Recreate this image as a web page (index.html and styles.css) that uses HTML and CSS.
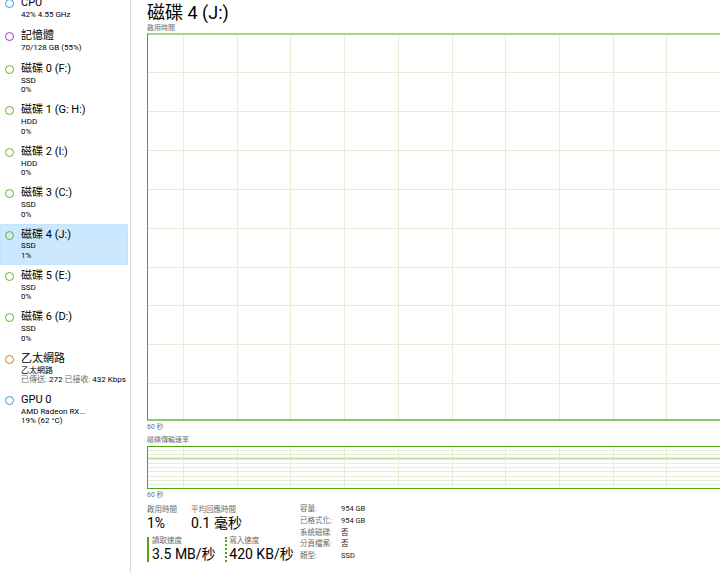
FILE: index.html
```html
<!DOCTYPE html>
<html lang="zh-Hant">
<head>
    <meta charset="UTF-8">
    <meta name="viewport" content="width=device-width, initial-scale=1.0">
    <title>工作管理員 - 效能</title>
    <link rel="stylesheet" href="styles.css">
</head>
<body>
    <div class="sidebar">
        <div class="list">
            <div class="item short">
                <span class="dot cpu"></span>
                <div class="info">
                    <div class="name">CPU</div>
                    <div class="sub">42% 4.55 GHz</div>
                </div>
            </div>
            <div class="item short">
                <span class="dot mem"></span>
                <div class="info">
                    <div class="name">記憶體</div>
                    <div class="sub">70/128 GB (55%)</div>
                </div>
            </div>
            <div class="item">
                <span class="dot disk"></span>
                <div class="info">
                    <div class="name">磁碟 0 (F:)</div>
                    <div class="sub">SSD</div>
                    <div class="sub">0%</div>
                </div>
            </div>
            <div class="item">
                <span class="dot disk"></span>
                <div class="info">
                    <div class="name">磁碟 1 (G: H:)</div>
                    <div class="sub">HDD</div>
                    <div class="sub">0%</div>
                </div>
            </div>
            <div class="item">
                <span class="dot disk"></span>
                <div class="info">
                    <div class="name">磁碟 2 (I:)</div>
                    <div class="sub">HDD</div>
                    <div class="sub">0%</div>
                </div>
            </div>
            <div class="item">
                <span class="dot disk"></span>
                <div class="info">
                    <div class="name">磁碟 3 (C:)</div>
                    <div class="sub">SSD</div>
                    <div class="sub">0%</div>
                </div>
            </div>
            <div class="item selected">
                <span class="dot disk"></span>
                <div class="info">
                    <div class="name">磁碟 4 (J:)</div>
                    <div class="sub">SSD</div>
                    <div class="sub">1%</div>
                </div>
            </div>
            <div class="item">
                <span class="dot disk"></span>
                <div class="info">
                    <div class="name">磁碟 5 (E:)</div>
                    <div class="sub">SSD</div>
                    <div class="sub">0%</div>
                </div>
            </div>
            <div class="item">
                <span class="dot disk"></span>
                <div class="info">
                    <div class="name">磁碟 6 (D:)</div>
                    <div class="sub">SSD</div>
                    <div class="sub">0%</div>
                </div>
            </div>
            <div class="item">
                <span class="dot net"></span>
                <div class="info">
                    <div class="name">乙太網路</div>
                    <div class="sub">乙太網路</div>
                    <div class="sub"><span class="muted">已傳送:</span> 272 <span class="muted">已接收:</span> 432 Kbps</div>
                </div>
            </div>
            <div class="item">
                <span class="dot gpu"></span>
                <div class="info">
                    <div class="name">GPU 0</div>
                    <div class="sub">AMD Radeon RX...</div>
                    <div class="sub">19% (62 °C)</div>
                </div>
            </div>
        </div>
    </div>

    <div class="main">
        <h1 class="title">磁碟 4 (J:)</h1>

        <div class="chart-label">啟用時間</div>
        <div class="chart big">
            <svg class="grid" xmlns="http://www.w3.org/2000/svg">
                <g stroke="#e2f0d7" stroke-width="1" shape-rendering="crispEdges">
                    <line x1="35.5" y1="0" x2="35.5" y2="400"/>
                    <line x1="89.5" y1="0" x2="89.5" y2="400"/>
                    <line x1="142.5" y1="0" x2="142.5" y2="400"/>
                    <line x1="196.5" y1="0" x2="196.5" y2="400"/>
                    <line x1="250.5" y1="0" x2="250.5" y2="400"/>
                    <line x1="304.5" y1="0" x2="304.5" y2="400"/>
                    <line x1="357.5" y1="0" x2="357.5" y2="400"/>
                    <line x1="411.5" y1="0" x2="411.5" y2="400"/>
                    <line x1="465.5" y1="0" x2="465.5" y2="400"/>
                    <line x1="518.5" y1="0" x2="518.5" y2="400"/>
                    <line x1="572.5" y1="0" x2="572.5" y2="400"/>
                    <line x1="0" y1="37.5" x2="700" y2="37.5"/>
                    <line x1="0" y1="76.5" x2="700" y2="76.5"/>
                    <line x1="0" y1="115.5" x2="700" y2="115.5"/>
                    <line x1="0" y1="154.5" x2="700" y2="154.5"/>
                    <line x1="0" y1="193.5" x2="700" y2="193.5"/>
                    <line x1="0" y1="232.5" x2="700" y2="232.5"/>
                    <line x1="0" y1="270.5" x2="700" y2="270.5"/>
                    <line x1="0" y1="309.5" x2="700" y2="309.5"/>
                    <line x1="0" y1="348.5" x2="700" y2="348.5"/>
                </g>
            </svg>
        </div>
        <div class="chart-label tight">60 秒</div>

        <div class="chart-label">磁碟傳輸速率</div>
        <div class="chart small">
            <svg class="grid" xmlns="http://www.w3.org/2000/svg">
                <g stroke="#e2f0d7" stroke-width="1" shape-rendering="crispEdges">
                    <line x1="35.5" y1="0" x2="35.5" y2="60"/>
                    <line x1="89.5" y1="0" x2="89.5" y2="60"/>
                    <line x1="142.5" y1="0" x2="142.5" y2="60"/>
                    <line x1="196.5" y1="0" x2="196.5" y2="60"/>
                    <line x1="250.5" y1="0" x2="250.5" y2="60"/>
                    <line x1="304.5" y1="0" x2="304.5" y2="60"/>
                    <line x1="357.5" y1="0" x2="357.5" y2="60"/>
                    <line x1="411.5" y1="0" x2="411.5" y2="60"/>
                    <line x1="465.5" y1="0" x2="465.5" y2="60"/>
                    <line x1="518.5" y1="0" x2="518.5" y2="60"/>
                    <line x1="572.5" y1="0" x2="572.5" y2="60"/>
                    <line x1="0" y1="3.5" x2="700" y2="3.5"/>
                    <line x1="0" y1="7.5" x2="700" y2="7.5"/>
                    <line x1="0" y1="16.5" x2="700" y2="16.5"/>
                    <line x1="0" y1="20.5" x2="700" y2="20.5"/>
                    <line x1="0" y1="24.5" x2="700" y2="24.5"/>
                    <line x1="0" y1="29.5" x2="700" y2="29.5"/>
                    <line x1="0" y1="33.5" x2="700" y2="33.5"/>
                    <line x1="0" y1="37.5" x2="700" y2="37.5"/>
                </g>
                <line x1="0" y1="11.5" x2="700" y2="11.5" stroke="#bde2a6" stroke-width="2"/>
            </svg>
        </div>
        <div class="chart-label tight">60 秒</div>

        <div class="stats">
            <div class="stats-left">
                <div class="stat-row">
                    <div class="stat w-active">
                        <div class="stat-label">啟用時間</div>
                        <div class="stat-value">1%</div>
                    </div>
                    <div class="stat">
                        <div class="stat-label">平均回應時間</div>
                        <div class="stat-value">0.1 毫秒</div>
                    </div>
                </div>
                <div class="stat-row second">
                    <div class="stat read w-read">
                        <div class="stat-label">讀取速度</div>
                        <div class="stat-value">3.5 MB/秒</div>
                    </div>
                    <div class="stat write">
                        <div class="stat-label">寫入速度</div>
                        <div class="stat-value">420 KB/秒</div>
                    </div>
                </div>
            </div>
            <div class="props">
                <div class="prop"><span class="prop-key">容量:</span><span class="prop-val">954 GB</span></div>
                <div class="prop"><span class="prop-key">已格式化:</span><span class="prop-val">954 GB</span></div>
                <div class="prop"><span class="prop-key">系統磁碟:</span><span class="prop-val">否</span></div>
                <div class="prop"><span class="prop-key">分頁檔案:</span><span class="prop-val">否</span></div>
                <div class="prop"><span class="prop-key">類型:</span><span class="prop-val">SSD</span></div>
            </div>
        </div>
    </div>
</body>
</html>
```

FILE: styles.css
```css
body {
    margin: 0;
    height: 100vh;
    overflow: hidden;
    display: flex;
    background: #fff;
    color: #000;
    font-family: Roboto, "Noto Sans CJK TC", sans-serif;
}

/* left list */
.sidebar {
    width: 130px;
    flex-shrink: 0;
    border-right: 1px solid #dadada;
    overflow: hidden;
}
.list {
    margin-top: -7.4px;
}
.item {
    display: flex;
    align-items: flex-start;
    width: 128px;
    padding: 4.55px 0 4.95px;
    box-sizing: border-box;
}
.item.short {
    padding-bottom: 5.55px;
}
.item.short + .item.short {
    padding-bottom: 6.35px;
}
.item.selected {
    background: #cce8ff;
    box-shadow: inset 0 0 0 1px #c4e3fd;
}
.dot {
    width: 9px;
    height: 9px;
    margin: 2px 7px 0 5px;
    border: 1.3px solid;
    border-radius: 50%;
    box-sizing: border-box;
    flex-shrink: 0;
}
.dot.cpu, .dot.gpu { border-color: #3c97d3; }
.dot.mem { border-color: #9a3cc3; }
.dot.disk { border-color: #62b133; }
.dot.net { border-color: #c27a3c; }
.name {
    font-size: 11px;
    line-height: 12.9px;
    white-space: nowrap;
}
.sub {
    font-size: 8px;
    line-height: 9.5px;
    color: #000;
    white-space: nowrap;
}
.muted {
    color: #6a6a6a;
}

/* right pane */
.main {
    flex: 1;
    min-width: 0;
    overflow: hidden;
    padding: 2.8px 0 0 16px;
}
.title {
    margin: 0;
    font-size: 18px;
    line-height: 19px;
    font-weight: normal;
}
.chart-label {
    margin-top: 2.5px;
    font-size: 7px;
    line-height: 9px;
    color: #6e6e6e;
    white-space: nowrap;
}
.chart-label.tight {
    margin-top: 2.3px;
}
.chart {
    width: 620px;
    box-sizing: border-box;
}
.chart.big {
    height: 388px;
    margin-top: -0.3px;
    border-left: 1px solid #4da60c;
    border-top: 2px solid #a6d487;
    border-bottom: 2px solid #8fc86b;
}
.chart.small {
    height: 43px;
    margin-top: 0.7px;
    border: 1px solid #4da60c;
    border-right: none;
}
.chart-label.tight + .chart-label {
    margin-top: 3.7px;
}
.chart.small + .chart-label.tight {
    margin-top: 2.8px;
}
.grid {
    display: block;
    width: 100%;
    height: 100%;
}

/* bottom numbers */
.stats {
    display: flex;
    margin-top: 2.7px;
}
.stats-left {
    width: 153px;
    padding-top: 3px;
}
.stat-row {
    display: flex;
}
.stat-row.second {
    margin-top: 5.5px;
}
.w-active {
    width: 44px;
}
.w-read {
    width: 78px;
}
.stat {
    box-sizing: border-box;
}
.stat.read {
    border-left: 2px solid #4da60c;
    padding-left: 3px;
}
.stat.write {
    border-left: 2px dotted #4da60c;
    padding-left: 2.3px;
}
.stat-label {
    font-size: 7.5px;
    line-height: 8.8px;
    color: #6b6b6b;
    white-space: nowrap;
}
.stat-value {
    font-size: 14px;
    line-height: 16.4px;
    white-space: nowrap;
}
.props {
    font-size: 7.5px;
}
.prop {
    display: flex;
    line-height: 11.7px;
}
.prop-key {
    width: 41px;
    color: #6b6b6b;
    white-space: nowrap;
}
.prop-val {
    color: #222;
}
```
